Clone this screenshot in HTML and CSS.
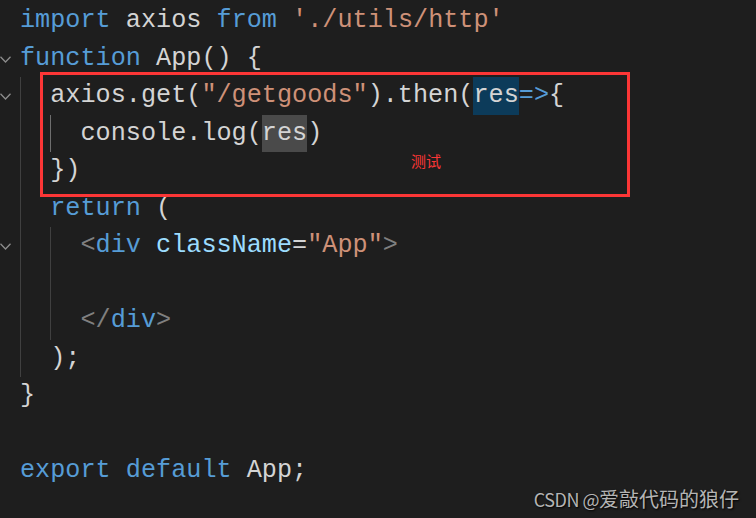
FILE: index.html
```html
<!DOCTYPE html>
<html lang="en">
<head>
    <meta charset="UTF-8">
    <meta name="viewport" content="width=device-width, initial-scale=1.0">
    <title>App.js</title>
    <link rel="stylesheet" href="styles.css">
</head>
<body>
    <div class="editor">
        <div class="line"><span class="fold"></span><span class="code"><span class="kw">import</span> axios <span class="kw">from</span> <span class="str">'./utils/http'</span></span></div>
        <div class="line"><span class="fold"><svg width="11" height="7" viewBox="0 0 11 7"><polyline points="0.5,0.8 5.5,6 10.5,0.8"/></svg></span><span class="code"><span class="kw">function</span> App() {</span></div>
        <div class="line"><span class="fold"><svg width="11" height="7" viewBox="0 0 11 7"><polyline points="0.5,0.8 5.5,6 10.5,0.8"/></svg></span><span class="code"><span class="guide"></span>axios.get(<span class="str">"/getgoods"</span>).then(<span class="hl sel">res</span><span class="kw">=&gt;</span>{</span></div>
        <div class="line"><span class="fold"></span><span class="code"><span class="guide"></span><span class="guide active"></span>console.log(<span class="hl word">res</span>)</span></div>
        <div class="line"><span class="fold"></span><span class="code"><span class="guide"></span>})</span></div>
        <div class="line"><span class="fold"></span><span class="code"><span class="guide"></span><span class="kw">return</span> (</span></div>
        <div class="line"><span class="fold"><svg width="11" height="7" viewBox="0 0 11 7"><polyline points="0.5,0.8 5.5,6 10.5,0.8"/></svg></span><span class="code"><span class="guide"></span><span class="guide"></span><span class="tag">&lt;</span><span class="kw">div</span> <span class="attr">className</span>=<span class="str">"App"</span><span class="tag">&gt;</span></span></div>
        <div class="line"><span class="fold"></span><span class="code"><span class="guide"></span><span class="guide"></span></span></div>
        <div class="line"><span class="fold"></span><span class="code"><span class="guide"></span><span class="guide"></span><span class="tag">&lt;/</span><span class="kw">div</span><span class="tag">&gt;</span></span></div>
        <div class="line"><span class="fold"></span><span class="code"><span class="guide"></span>);</span></div>
        <div class="line"><span class="fold"></span><span class="code">}</span></div>
        <div class="line"><span class="fold"></span><span class="code"></span></div>
        <div class="line"><span class="fold"></span><span class="code"><span class="kw">export</span> <span class="kw">default</span> App;</span></div>

        <div class="mark-box"></div>
        <div class="mark-note">测试</div>
    </div>

    <div class="watermark"><span class="wm-site">CSDN @</span>爱敲代码的狼仔</div>
</body>
</html>
```

FILE: styles.css
```css
body {
    margin: 0;
    background: #1e1e1e;
    color: #d4d4d4;
    height: 518px;
    overflow: hidden;
    position: relative;
}
.editor {
    position: relative;
    padding-top: 2px;
    font-family: 'Liberation Mono', monospace;
    font-size: 25.2px;
    line-height: 37.5px;
}
.line {
    display: flex;
    height: 37.5px;
}
.fold {
    flex: 0 0 20px;
    display: flex;
    align-items: center;
    padding-top: 2px;
    box-sizing: border-box;
}
.fold svg {
    display: block;
    fill: none;
    stroke: #8c8c8c;
    stroke-width: 1.3;
}
.code {
    white-space: pre;
}
.guide {
    display: inline-block;
    vertical-align: top;
    width: 2ch;
    height: 37.5px;
    border-left: 1px solid #404040;
    box-sizing: border-box;
}
.guide.active {
    border-left-color: #6e6e6e;
}
.kw { color: #569cd6; }
.str { color: #ce9178; }
.attr { color: #9cdcfe; }
.tag { color: #808080; }
.hl {
    display: inline-block;
    vertical-align: top;
}
.sel { background: #0c3b5a; }
.word { background: #4a4a4a; }
.mark-box {
    position: absolute;
    left: 40px;
    top: 72px;
    width: 590px;
    height: 125px;
    border: 3px solid #fc3636;
    box-sizing: border-box;
}
.mark-note {
    position: absolute;
    left: 411px;
    top: 151px;
    font-family: 'Noto Sans CJK SC', sans-serif;
    font-size: 15px;
    line-height: 20px;
    color: #fc3636;
}
.watermark {
    position: absolute;
    right: 17px;
    bottom: 7px;
    font-family: 'Noto Sans CJK SC', sans-serif;
    font-size: 20px;
    line-height: 24px;
    color: #b4b4b4;
    text-shadow: 1px 1px 2px #000;
}
.wm-site {
    font-size: 18px;
    letter-spacing: -0.5px;
}
```
